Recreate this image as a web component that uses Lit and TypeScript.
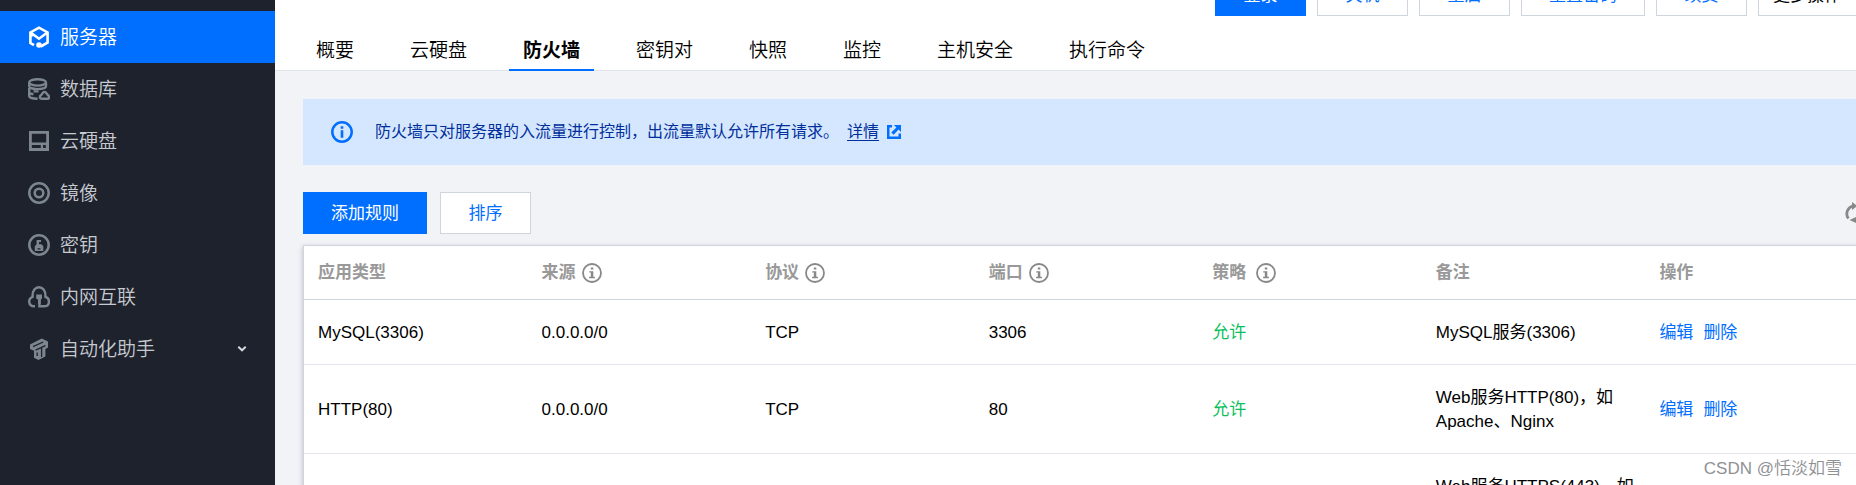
import { LitElement, html, css, svg, nothing } from "lit";
import { customElement, property } from "lit/decorators.js";
import { classMap } from "lit/directives/class-map.js";

const FONT = css`"Liberation Sans", "Noto Sans CJK SC", sans-serif`;

const navIcons: Record<string, unknown> = {
  server: svg`<g fill="none" stroke="currentColor" stroke-width="2.6">
    <path d="M6 19.200 2.400 17V6.400L11 1.700l8.600 4.700v10.200l-6.800 3.900"/>
    <path d="M3 6.800 11 12.700l8-5.900"/></g>
    <path d="M2.400 6.500 7 9.800 2.400 11z" fill="currentColor"/>
    <circle cx="11" cy="19" r="2.800" fill="currentColor"/>`,
  database: svg`<g fill="none" stroke="currentColor" stroke-width="2.400">
    <ellipse cx="9.600" cy="4.400" rx="8.400" ry="3.200"/>
    <path d="M1.200 4.800v3.400c0 1.600 3.400 2.900 8 2.900s8.800-1.200 8.800-2.900V4.800"/>
    <path d="M1.200 10v4c0 1 1.400 1.800 4.200 2.200M1.200 14.500v3.400c0 1.700 3.600 2.800 8.400 2.800M5.600 13.400h5"/>
    <path d="M13.500 20.700c-2 0-2.200-2.400-.4-3.600 1-.6 1.400-3.100 3.400-3.100s2.400 2.500 3.400 3.100c1.800 1.200 1.600 3.600-.4 3.600z"/></g>`,
  disk: svg`<path fill="currentColor" fill-rule="evenodd" d="M1 1h20v20H1zM3.800 3.800h14.400v8.700H3.800zM3.800 15h9v3h-9zM15 15h2.800v3H15z"/>`,
  image: svg`<g fill="none" stroke="currentColor" stroke-width="2.500">
    <circle cx="11" cy="11" r="9.700"/><circle cx="11" cy="11" r="4.300"/></g>`,
  key: svg`<circle cx="11" cy="11" r="9.700" fill="none" stroke="currentColor" stroke-width="2.500"/>
    <path fill-rule="evenodd" fill="currentColor" d="M8.600 6H13v2h-2v2.200h2.500l1.800 2V17H6.800v-4.800l1.800-2zM9.500 14.200v1.200h3v-1.200z"/>`,
  network: svg`<g fill="none" stroke="currentColor" stroke-width="2.400">
    <path d="M7 20.300C-.4 20.600-.2 12 4.600 10.800 3.800-2 18.200-2 17.400 10.800c4.800 1.200 5 9.500-1.400 9.500h-4.600V13"/></g>
    <path d="M8.200 8.500h5.800v4l-1.300 1.300v4.200h-2.600v-4.200l-1.900-1.300z" fill="currentColor"/>`,
  helper: svg`<path fill="currentColor" d="M2 6.500 13.800.6 20 3.600v6L17.400 11v7.500L10.400 22 6 19.700v-7L2 11z"/>
    <path fill="none" stroke="#1e222d" stroke-width="1.300" d="M5 8.600 15.200 4M7.600 12.200 17.400 7.600M13.600 10v9M9.200 14.500v3.600"/>`,
};

@customElement("info-icon")
class InfoIcon extends LitElement {
  @property({ type: Boolean }) strong = false;
  static styles = css`
    :host { display: inline-flex; flex: none; }
    svg { display: block; width: 20px; height: 20px; }
    .strong { width: 22px; height: 22px; }
  `;
  render() {
    return this.strong
      ? html`<svg class="strong" viewBox="0 0 22 22" aria-hidden="true">
          <circle cx="11" cy="11" r="9.700" fill="none" stroke="currentColor" stroke-width="2.500"/>
          <path d="M9.700 5.300h2.600v2.500H9.700zM9.700 9.300h2.600v7.400H9.700z" fill="currentColor"/></svg>`
      : html`<svg viewBox="0 0 20 20" aria-hidden="true">
          <circle cx="10" cy="10" r="9" fill="none" stroke="currentColor" stroke-width="1.800"/>
          <path d="M8.800 4.500h2.500v2.100H8.800zM7.300 8.200h4v5.600h1.600v1.400H7.100v-1.400h1.700V9.600H7.300z" fill="currentColor"/></svg>`;
  }
}

@customElement("side-nav")
class SideNav extends LitElement {
  static styles = css`
    :host { display: block; flex: none; width: 275px; background: #1e222d; font-family: ${FONT}; }
    .list { margin: 0; padding: 11px 0 0; list-style: none; }
    .item {
      display: flex; align-items: center; gap: 10px; height: 52px; padding: 0 28px;
      color: #7d868f; text-decoration: none;
    }
    .label { flex: 1; padding-top: 2px; font-size: 19px; line-height: 28px; font-weight: 350; color: #c6cad0; }
    .active { background: #006eff; color: #fff; }
    .active .label { color: #fff; }
    .glyph { width: 22px; height: 22px; }
    .chevron { width: 10px; height: 8px; color: #d4d7dc; }
  `;
  items = [
    { id: "server", label: "服务器" },
    { id: "database", label: "数据库" },
    { id: "disk", label: "云硬盘" },
    { id: "image", label: "镜像" },
    { id: "key", label: "密钥" },
    { id: "network", label: "内网互联" },
    { id: "helper", label: "自动化助手", expandable: true },
  ];
  render() {
    return html`<nav><ul class="list">
      ${this.items.map((i) => html`<li><a href="#${i.id}" class=${classMap({ item: true, active: i.id === "server" })}>
        <svg class="glyph" viewBox="0 0 22 22" aria-hidden="true">${navIcons[i.id]}</svg>
        <span class="label">${i.label}</span>
        ${i.expandable ? html`<svg class="chevron" viewBox="0 0 10 8" aria-hidden="true">
          <path d="M1.300 1.800 5 5.300l3.700-3.500" fill="none" stroke="currentColor" stroke-width="2"/></svg>` : nothing}
      </a></li>`)}
    </ul></nav>`;
  }
}

const buttonStyles = css`
  .btn {
    box-sizing: border-box; min-width: 91px; height: 42px; padding: 2px 27px 0; margin: 0;
    border: 1px solid #cfd5de; border-radius: 0; background: #fff; color: #006eff;
    font-family: inherit; font-size: 17px; line-height: 24px; white-space: nowrap; cursor: pointer;
  }
  .primary { background: #006eff; border-color: #006eff; color: #fff; }
`;

@customElement("instance-header")
class InstanceHeader extends LitElement {
  static styles = [buttonStyles, css`
    :host { display: block; background: #fff; border-bottom: 1px solid #e1e4ea; font-family: ${FONT}; }
    .actions { display: flex; justify-content: flex-end; gap: 11px; padding: 0 28px; }
    .more { display: flex; align-items: center; gap: 4px; padding: 2px 14px 0; color: #000; }
    .arrow { width: 10px; height: 8px; }
    .tabs { display: flex; gap: 28px; padding: 17px 27px 0; }
    .tab {
      margin: 0 0 -1px; padding: 0 14px; border: 0; border-bottom: 2px solid transparent;
      background: none; color: #000; font-family: inherit; font-size: 19px; font-weight: 350;
      line-height: 36px; white-space: nowrap; cursor: pointer;
    }
    .current { border-bottom-color: #006eff; font-weight: 700; }
  `];
  render() {
    return html`
      <div class="actions">
        <button class="btn primary">登录</button>
        ${["关机", "重启", "重置密码", "续费"].map((t) => html`<button class="btn">${t}</button>`)}
        <button class="btn more">更多操作<svg class="arrow" viewBox="0 0 10 8" aria-hidden="true">
          <path d="M1 2l4 4 4-4" fill="none" stroke="currentColor" stroke-width="1.500"/></svg></button>
      </div>
      <div class="tabs" role="tablist">
        ${["概要", "云硬盘", "防火墙", "密钥对", "快照", "监控", "主机安全", "执行命令"].map((t) =>
          html`<button role="tab" aria-selected=${t === "防火墙"} class=${classMap({ tab: true, current: t === "防火墙" })}>${t}</button>`)}
      </div>`;
  }
}

@customElement("firewall-panel")
class FirewallPanel extends LitElement {
  static styles = [buttonStyles, css`
    :host { display: block; padding: 28px; font-family: ${FONT}; font-size: 17px; line-height: 24px; color: #000; }
    .alert {
      display: flex; align-items: center; gap: 22px; padding: 21px 28px;
      background: #d5e7ff; color: #002f9c; font-size: 16px; font-weight: 400;
    }
    .alert info-icon { color: #006eff; }
    .message { display: flex; align-items: center; gap: 8px; margin: 0; }
    .detail { color: inherit; text-decoration: underline; text-underline-offset: 3px; }
    .jump { width: 14px; height: 14px; color: #006eff; }
    .toolbar { display: flex; align-items: center; gap: 13px; margin: 27px 0 11px; }
    .refresh { display: flex; margin-left: auto; padding: 0 4px; border: 0; background: none; color: #888; cursor: pointer; }
    .refresh svg { width: 22px; height: 22px; }
    .card { border: 1px solid #cfd5de; background: #fff; box-shadow: 0 2px 5px rgba(54, 58, 80, 0.32); }
    .rules { width: 100%; border-collapse: separate; border-spacing: 0; table-layout: fixed; }
    th, td { padding: 21px 10px 19px 14px; text-align: left; border-bottom: 1px solid #e3e7ed; font-weight: 400; }
    th { padding-top: 15px; padding-bottom: 14px; border-bottom-color: #cfd5de; color: #999; font-weight: 700; }
    .head { display: flex; align-items: center; gap: 6px; }
    .roomy { gap: 10px; }
    .head info-icon { color: #888; }
    .allow { color: #0abf5b; }
    .ops { display: flex; gap: 10px; }
    .ops a { color: #006eff; text-decoration: none; }
  `];
  columns = [
    { label: "应用类型" },
    { label: "来源", hint: true },
    { label: "协议", hint: true },
    { label: "端口", hint: true },
    { label: "策略", hint: true, roomy: true },
    { label: "备注" },
    { label: "操作" },
  ];
  rules = [
    { app: "MySQL(3306)", port: "3306", note: "MySQL服务(3306)" },
    { app: "HTTP(80)", port: "80", note: "Web服务HTTP(80)，如Apache、Nginx" },
    { app: "HTTPS(443)", port: "443", note: "Web服务HTTPS(443)，如Apache、Nginx" },
  ];
  render() {
    return html`
      <div class="alert" role="note">
        <info-icon strong></info-icon>
        <p class="message"><span>防火墙只对服务器的入流量进行控制，出流量默认允许所有请求。</span>
          <a class="detail" href="#detail">详情</a>
          <svg class="jump" viewBox="0 0 14 14" aria-hidden="true">
            <path fill="currentColor" d="M0 0h5v2.500H2.500v9h9V8.500H14V14H0zM7 0h7v7l-2.400-2.400-5 5.200-2.400-2.400 5.200-5z"/></svg>
        </p>
      </div>
      <div class="toolbar">
        <button class="btn primary">添加规则</button>
        <button class="btn">排序</button>
        <button class="refresh" aria-label="刷新"><svg viewBox="0 0 22 22" aria-hidden="true">
          <path d="M4.400 16.500A8 8 0 0 1 9 4M17.600 5.500A8 8 0 0 1 13 18" fill="none" stroke="currentColor" stroke-width="2.800"/>
          <path d="M8 0l5.500 4L8 8zM14 14l-8.500 4L14 22z" fill="currentColor"/></svg></button>
      </div>
      <div class="card">
        <table class="rules">
          <thead><tr>${this.columns.map((c) => html`<th scope="col"><span class=${classMap({ head: true, roomy: !!c.roomy })}>${c.label}${c.hint ? html`<info-icon></info-icon>` : nothing}</span></th>`)}</tr></thead>
          <tbody>${this.rules.map((r) => html`<tr>
            <td>${r.app}</td><td>0.0.0.0/0</td><td>TCP</td><td>${r.port}</td>
            <td><span class="allow">允许</span></td><td>${r.note}</td>
            <td><span class="ops"><a href="#edit">编辑</a><a href="#delete">删除</a></span></td>
          </tr>`)}</tbody>
        </table>
      </div>`;
  }
}

@customElement("app-root")
class AppRoot extends LitElement {
  static styles = css`
    :host { display: block; position: relative; height: 100vh; overflow: hidden; background: #f2f3f7; font-family: ${FONT}; }
    .shell { display: flex; height: 100%; }
    /* The console is scrolled slightly down and is a little wider than the window. */
    .main { flex: 1; min-width: 0; margin: -26px -42px 0 0; }
    .credit {
      position: absolute; right: 14px; bottom: 4px; font-size: 17px; line-height: 24px;
      color: #8f9194; font-weight: 350; text-shadow: 0 0 1px #fff;
    }
  `;
  render() {
    return html`
      <div class="shell">
        <side-nav></side-nav>
        <main class="main">
          <instance-header></instance-header>
          <firewall-panel></firewall-panel>
        </main>
      </div>
      <span class="credit">CSDN @恬淡如雪</span>`;
  }
}
